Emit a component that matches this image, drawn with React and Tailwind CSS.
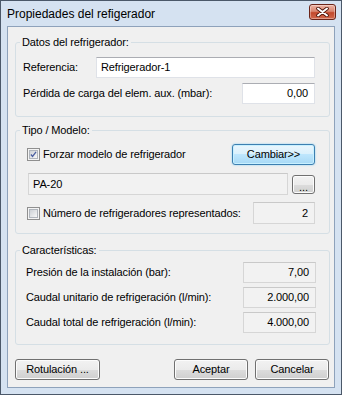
const btn =
  "h-[21px] rounded-[3px] border border-[#707070] bg-[linear-gradient(#f2f2f2_0%,#ebebeb_50%,#dddddd_50%,#cfcfcf_100%)] shadow-[inset_0_0_0_1px_#fcfcfc] flex items-center justify-center text-[11px] text-black";

function Check({ checked }) {
  return (
    <span className="w-[13px] h-[13px] border border-[#8f8f8f] bg-[#f4f4f4] flex items-center justify-center shrink-0">
      <span className="w-[9px] h-[9px] border border-[#b0b5bc] bg-[linear-gradient(135deg,#cdd1d6,#f7f7f7)] flex items-center justify-center">
        {checked && (
          <svg width="11" height="11" viewBox="0 0 11 11" className="-mt-[1px]">
            <path d="M1.5 5.5 L4 8.5 L9.5 1.5" fill="none" stroke="#4a5ea0" strokeWidth="2" />
          </svg>
        )}
      </span>
    </span>
  );
}

function Field({ className = "", children, ro = false, align = "right" }) {
  return (
    <div
      className={
        "h-[21px] border flex items-center text-[11px] " +
        (ro
          ? "bg-[#f2f2f2] border-[#d6d6d6] border-t-[#c9c9c9] "
          : "bg-white border-[#dfe2e8] border-t-[#abadb3] ") +
        (align === "right" ? "justify-end pr-[6px] " : "justify-start pl-[4px] ") +
        className
      }
    >
      {children}
    </div>
  );
}

export default function App() {
  return (
    <div className="w-[342px] h-[395px] bg-[#d5e2f1] border border-[#4b5869] flex flex-col font-['Liberation_Sans',Arial,sans-serif] text-[11px] text-black leading-[13px] tracking-[-0.12px]">
      {/* title bar */}
      <div className="h-[25px] shrink-0 flex items-start justify-between pl-[6px] pr-[5px]">
        <span className="text-[12px] leading-[16px] mt-[5px] tracking-normal">Propiedades del refigerador</span>
        <div className="mt-[3px] w-[27px] h-[16px] rounded-[3px] border border-[#6b2418] bg-[linear-gradient(#eeb3a4_0%,#d98670_45%,#c2482c_55%,#d2684c_100%)] shadow-[inset_0_0_0_1px_rgba(255,255,255,0.35)] flex items-center justify-center">
          <svg width="13" height="10" viewBox="0 0 13 10">
            <path d="M2 1.5 L11 8.5 M11 1.5 L2 8.5" stroke="#4a1208" strokeWidth="3.6" strokeLinecap="round" />
            <path d="M2 1.5 L11 8.5 M11 1.5 L2 8.5" stroke="#ffffff" strokeWidth="2" strokeLinecap="round" />
          </svg>
        </div>
      </div>
      {/* client */}
      <div className="mx-[6px] h-[362px] shrink-0 border border-[#8ea2bb] bg-[#f0f0f0] flex flex-col pt-[9px]">
        {/* group 1 */}
        <fieldset className="ml-[7px] w-[315px] h-[81px] border border-[#d5dfe5] rounded-[3px] p-0 m-0 min-w-0 shrink-0">
          <legend className="ml-[4px] px-[2px] h-[13px] leading-[13px]">Datos del refrigerador:</legend>
          <div className="mt-[8px] flex flex-col gap-[5px] pl-[7px] pr-[14px]">
            <div className="h-[21px] flex items-center justify-between">
              <span>Referencia:</span>
              <Field className="w-[219px]" align="left">Refrigerador-1</Field>
            </div>
            <div className="h-[21px] flex items-center justify-between">
              <span>Pérdida de carga del elem. aux. (mbar):</span>
              <Field className="w-[73px]">0,00</Field>
            </div>
          </div>
        </fieldset>
        {/* group 2 */}
        <fieldset className="mt-[7px] ml-[7px] w-[315px] h-[110px] border border-[#d5dfe5] rounded-[3px] p-0 min-w-0 shrink-0">
          <legend className="ml-[4px] px-[2px] h-[13px] leading-[13px]">Tipo / Modelo:</legend>
          <div className="mt-[7px] flex flex-col pl-[11px] pr-[14px]">
            <div className="h-[21px] flex items-center">
              <Check checked />
              <span className="ml-[3px]">Forzar modelo de refrigerador</span>
              <div className="ml-auto w-[83px] h-[21px] rounded-[3px] border border-[#3c7fb1] bg-[linear-gradient(#eaf6fd_0%,#d9f0fc_50%,#bee6fd_50%,#a7d9f5_100%)] shadow-[inset_0_0_0_1px_#c8f0ff,0_0_2px_#7fcbf0] flex items-center justify-center">
                Cambiar&gt;&gt;
              </div>
            </div>
            <div className="mt-[8px] h-[22px] flex items-center">
              <Field ro align="left" className="ml-[1px] w-[260px] h-[22px]">PA-20</Field>
              <div className={btn + " ml-auto w-[23px] !h-[19px] !items-end pb-[3px] leading-[6px]"}>...</div>
            </div>
            <div className="mt-[7px] h-[22px] flex items-center">
              <Check />
              <span className="ml-[3px]">Número de refrigeradores representados:</span>
              <Field ro className="ml-auto w-[62px] h-[22px]">2</Field>
            </div>
          </div>
        </fieldset>
        {/* group 3 */}
        <fieldset className="mt-[10px] ml-[7px] w-[315px] h-[101px] border border-[#d5dfe5] rounded-[3px] p-0 min-w-0 shrink-0">
          <legend className="ml-[4px] px-[2px] h-[13px] leading-[13px]">Características:</legend>
          <div className="mt-[5px] flex flex-col gap-[4px] pl-[10px] pr-[13px]">
            <div className="h-[21px] flex items-center justify-between">
              <span>Presión de la instalación (bar):</span>
              <Field ro className="w-[73px]">7,00</Field>
            </div>
            <div className="h-[21px] flex items-center justify-between">
              <span>Caudal unitario de refrigeración (l/min):</span>
              <Field ro className="w-[73px]">2.000,00</Field>
            </div>
            <div className="h-[21px] flex items-center justify-between">
              <span>Caudal total de refrigeración (l/min):</span>
              <Field ro className="w-[73px]">4.000,00</Field>
            </div>
          </div>
        </fieldset>
        {/* buttons */}
        <div className="mt-[14px] flex items-center pl-[7px] pr-[5px]">
          <div className={btn + " w-[85px]"}>Rotulación ...</div>
          <div className={btn + " ml-auto w-[74px]"}>Aceptar</div>
          <div className={btn + " ml-[7px] w-[74px]"}>Cancelar</div>
        </div>
      </div>
    </div>
  );
}
